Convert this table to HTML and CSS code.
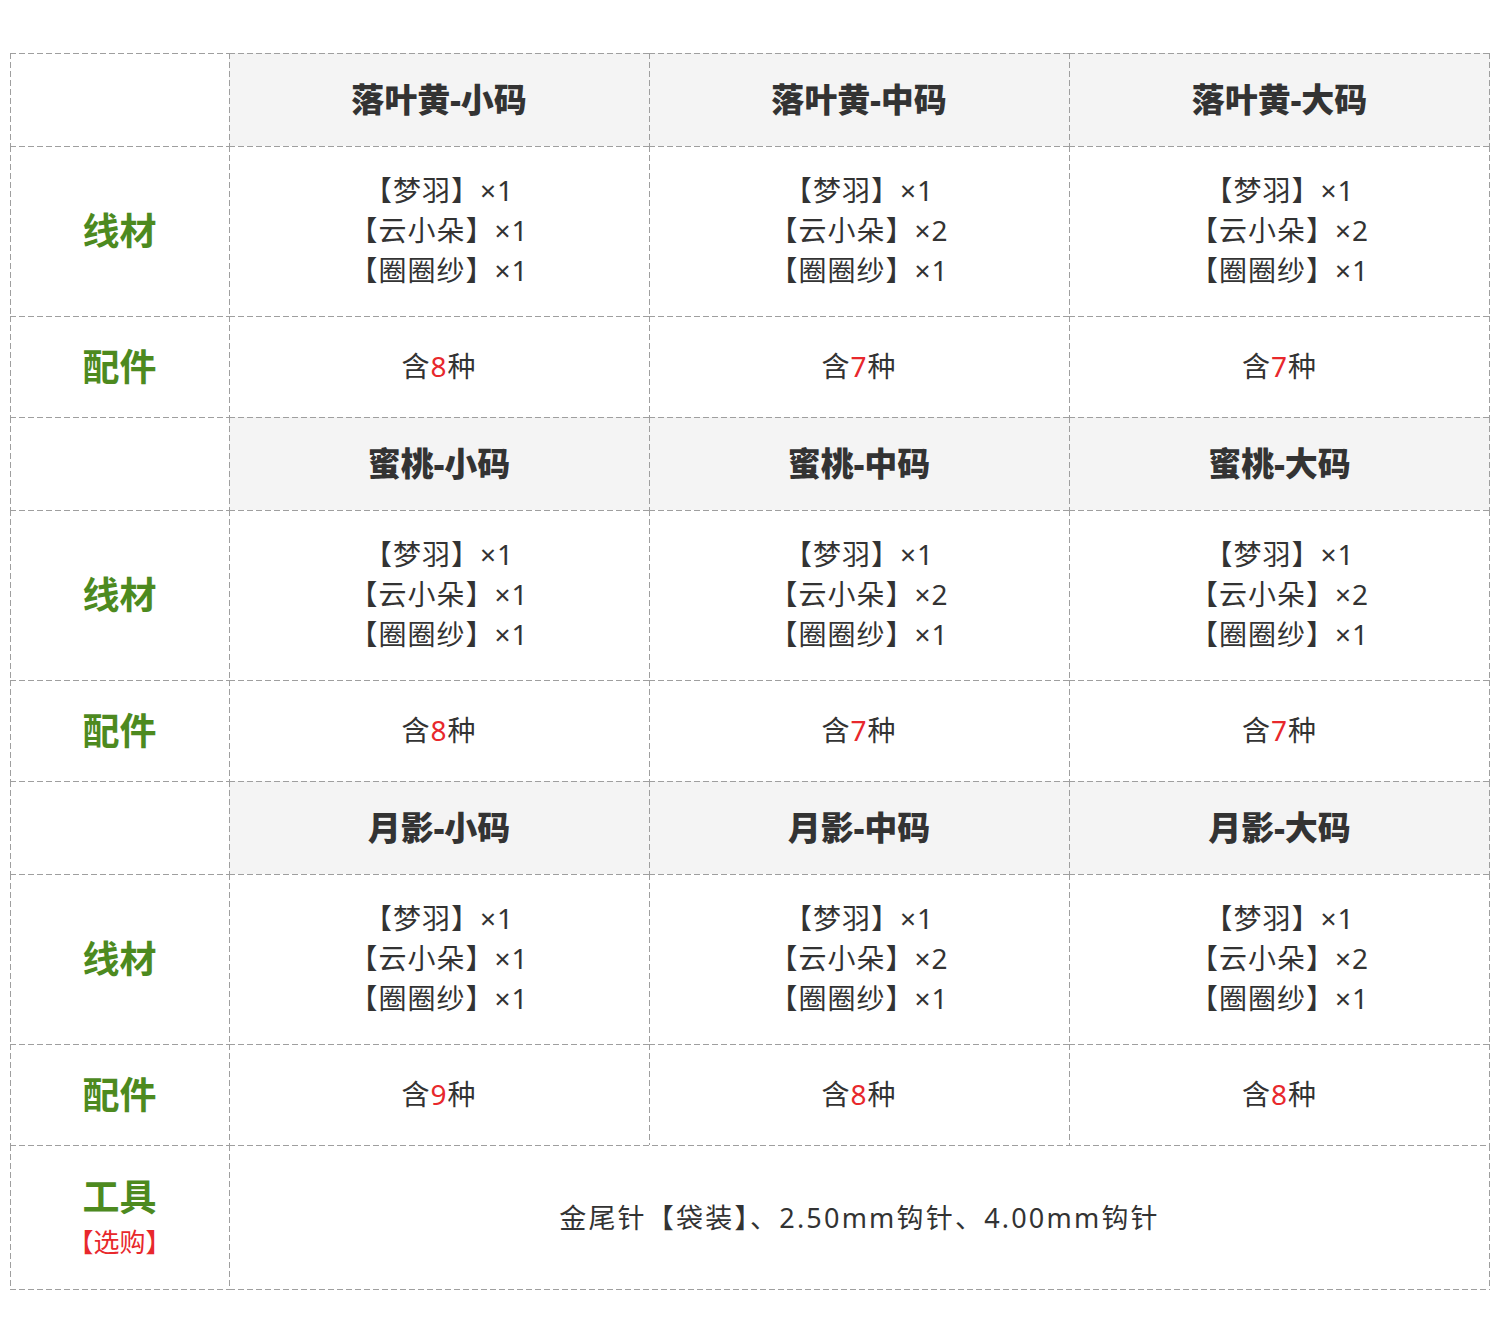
FILE: index.html
```html
<!DOCTYPE html>
<html lang="zh">
<head>
<meta charset="utf-8">
<link rel="stylesheet" href="styles.css">
</head>
<body>
<table class="spec">
  <colgroup>
    <col class="c-label"><col class="c-item"><col class="c-item"><col class="c-last">
  </colgroup>
  <tbody>
    <tr class="head">
      <td class="blank"></td><th>落叶黄-小码</th><th>落叶黄-中码</th><th>落叶黄-大码</th>
    </tr>
    <tr class="yarn">
      <td class="label">线材</td>
      <td>【梦羽】×1<br>【云小朵】×1<br>【圈圈纱】×1</td>
      <td>【梦羽】×1<br>【云小朵】×2<br>【圈圈纱】×1</td>
      <td>【梦羽】×1<br>【云小朵】×2<br>【圈圈纱】×1</td>
    </tr>
    <tr class="parts">
      <td class="label">配件</td>
      <td>含<span class="num">8</span>种</td>
      <td>含<span class="num">7</span>种</td>
      <td>含<span class="num">7</span>种</td>
    </tr>
    <tr class="head">
      <td class="blank"></td><th>蜜桃-小码</th><th>蜜桃-中码</th><th>蜜桃-大码</th>
    </tr>
    <tr class="yarn">
      <td class="label">线材</td>
      <td>【梦羽】×1<br>【云小朵】×1<br>【圈圈纱】×1</td>
      <td>【梦羽】×1<br>【云小朵】×2<br>【圈圈纱】×1</td>
      <td>【梦羽】×1<br>【云小朵】×2<br>【圈圈纱】×1</td>
    </tr>
    <tr class="parts">
      <td class="label">配件</td>
      <td>含<span class="num">8</span>种</td>
      <td>含<span class="num">7</span>种</td>
      <td>含<span class="num">7</span>种</td>
    </tr>
    <tr class="head">
      <td class="blank"></td><th>月影-小码</th><th>月影-中码</th><th>月影-大码</th>
    </tr>
    <tr class="yarn">
      <td class="label">线材</td>
      <td>【梦羽】×1<br>【云小朵】×1<br>【圈圈纱】×1</td>
      <td>【梦羽】×1<br>【云小朵】×2<br>【圈圈纱】×1</td>
      <td>【梦羽】×1<br>【云小朵】×2<br>【圈圈纱】×1</td>
    </tr>
    <tr class="parts">
      <td class="label">配件</td>
      <td>含<span class="num">9</span>种</td>
      <td>含<span class="num">8</span>种</td>
      <td>含<span class="num">8</span>种</td>
    </tr>
    <tr class="tools">
      <td class="label">工具<span class="opt">【选购】</span></td>
      <td class="wide" colspan="3">金尾针【袋装】、2.50mm钩针、4.00mm钩针</td>
    </tr>
  </tbody>
</table>
</body>
</html>
```

FILE: styles.css
```css
html, body {
  margin: 0;
  background: #fff;
}
body {
  padding: 53px 10px 0 10px;
  font-family: "Noto Sans", "Noto Sans CJK SC", sans-serif;
  color: #333;
}
.spec {
  border-collapse: separate;
  border-spacing: 0;
  width: 1480px;
  table-layout: fixed;
}
.c-label { width: 219px; }
.c-item { width: 420px; }
.c-last { width: 421px; }

.spec td, .spec th {
  text-align: center;
  vertical-align: middle;
  padding: 0 0 1px 0;
  font-size: 28px;
  letter-spacing: 1px;
  line-height: 40px;
  font-weight: 400;
  background-image:
    linear-gradient(90deg, #9f9f9f 6px, transparent 6px),
    linear-gradient(180deg, #9f9f9f 6px, transparent 6px);
  background-size: 9px 1px, 1px 9px;
  background-position: left top, left top;
  background-repeat: repeat-x, repeat-y;
}
/* right edge of the table */
.spec tr > :last-child {
  background-image:
    linear-gradient(90deg, #9f9f9f 6px, transparent 6px),
    linear-gradient(180deg, #9f9f9f 6px, transparent 6px),
    linear-gradient(180deg, #9f9f9f 6px, transparent 6px);
  background-size: 9px 1px, 1px 9px, 1px 9px;
  background-position: left top, left top, right top;
  background-repeat: repeat-x, repeat-y, repeat-y;
}
/* bottom edge of the table */
.tools td.label {
  background-image:
    linear-gradient(90deg, #9f9f9f 6px, transparent 6px),
    linear-gradient(180deg, #9f9f9f 6px, transparent 6px),
    linear-gradient(90deg, #9f9f9f 6px, transparent 6px);
  background-size: 9px 1px, 1px 9px, 9px 1px;
  background-position: left top, left top, left bottom;
  background-repeat: repeat-x, repeat-y, repeat-x;
}
.tools td.wide {
  background-image:
    linear-gradient(90deg, #9f9f9f 6px, transparent 6px),
    linear-gradient(180deg, #9f9f9f 6px, transparent 6px),
    linear-gradient(180deg, #9f9f9f 6px, transparent 6px),
    linear-gradient(90deg, #9f9f9f 6px, transparent 6px);
  background-size: 9px 1px, 1px 9px, 1px 9px, 9px 1px;
  background-position: left top, left top, right top, left bottom;
  background-repeat: repeat-x, repeat-y, repeat-y, repeat-x;
  font-size: 27px;
  letter-spacing: 2.2px;
  padding-bottom: 0;
}

.head { height: 93px; }
.yarn { height: 170px; }
.parts { height: 101px; }
.tools { height: 145px; }

.head th {
  background-color: #f4f4f4;
  font-size: 33px;
  font-weight: 900;
  letter-spacing: 0;
  color: #333;
  padding-bottom: 0;
}
.yarn td { padding-bottom: 3px; }
.spec td.label {
  color: #4d8a1f;
  font-size: 37px;
  font-weight: 700;
  letter-spacing: 0;
  line-height: 44px;
  padding-bottom: 0;
}
.spec .tools td.label { padding: 4px 0 0 0; }
.opt {
  display: block;
  color: #e8282c;
  font-size: 26px;
  font-weight: 400;
  line-height: 46px;
}
.num { color: #e8282c; }
```
